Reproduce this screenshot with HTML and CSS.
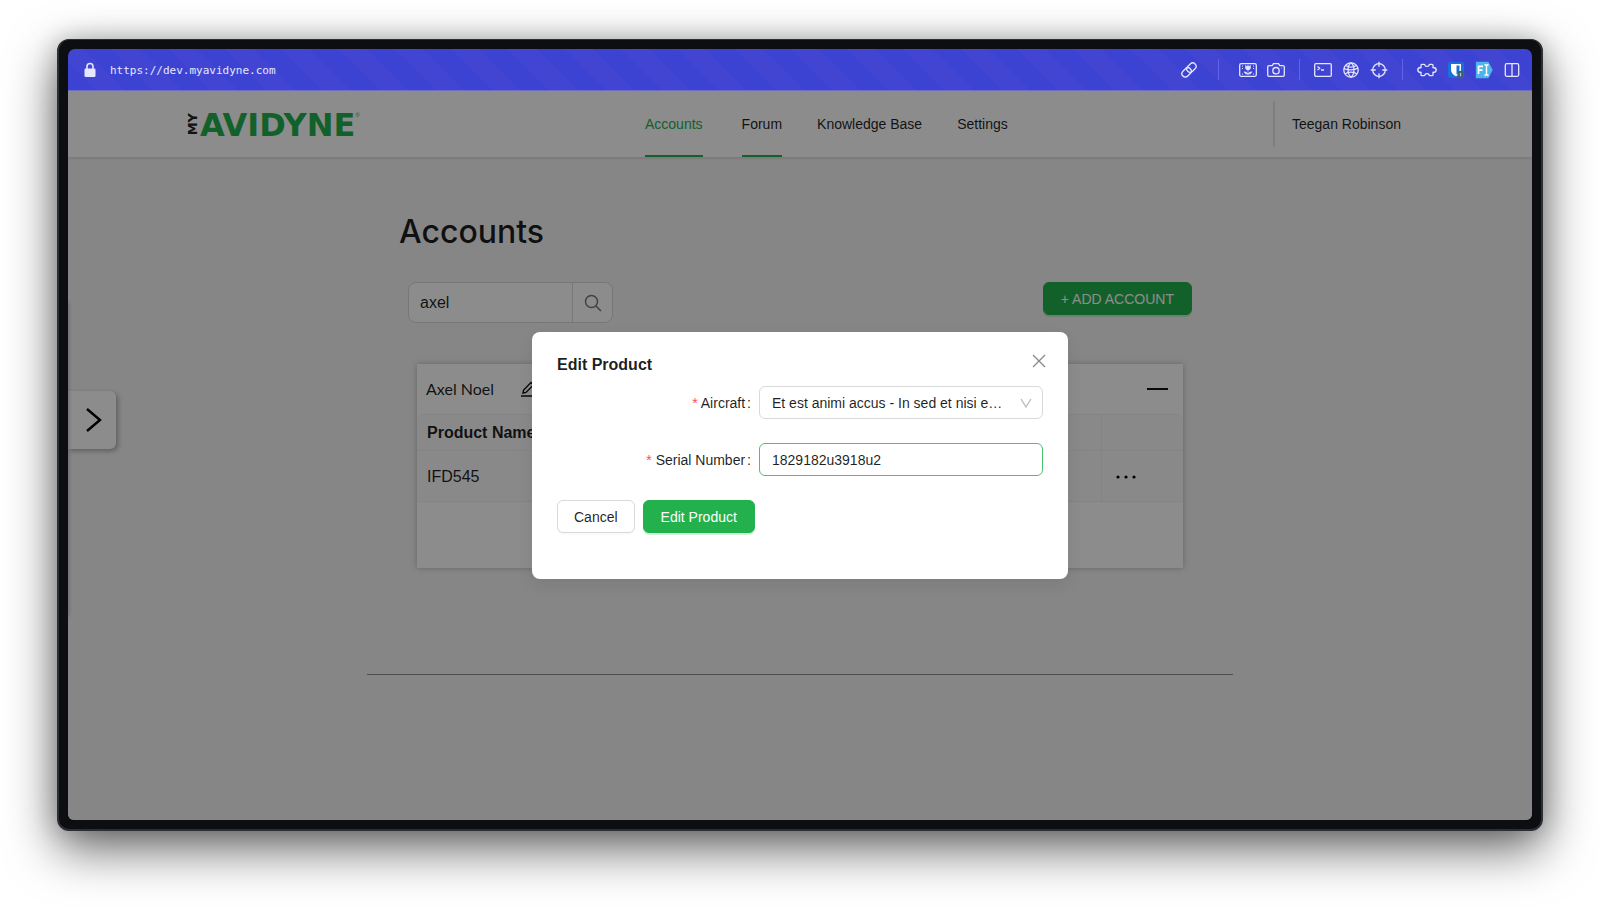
FILE: index.html
```html
<!DOCTYPE html>
<html lang="en">
<head>
<meta charset="utf-8">
<title>MyAvidyne - Accounts</title>
<link rel="stylesheet" href="styles.css">
</head>
<body>
<div class="window">
  <div class="browser-bar">
    <svg class="lock" viewBox="0 0 12 16" width="12" height="16"><path d="M3 7V4.500a3 3 0 0 1 6 0V7" fill="none" stroke="currentColor" stroke-width="1.600"/><rect x="0.500" y="6.500" width="11" height="8.500" rx="1.200" fill="currentColor"/></svg>
    <span class="url">https://dev.myavidyne.com</span>
    <div class="tools">
      <button class="tool" aria-label="Copy link"><svg viewBox="0 0 18 18"><g transform="rotate(-45 9 9)"><rect x="0.400" y="5.600" width="10.400" height="6.800" rx="3.400"/><rect x="7.200" y="5.600" width="10.400" height="6.800" rx="3.400"/></g></svg></button>
    </div>
    <div class="tools group-media">
      <button class="tool" aria-label="Capture image"><svg viewBox="0 0 18 18"><rect x="0.700" y="2.700" width="16.600" height="12.600" rx="1.500"/><path d="M3 5h1M14 5h1M3 7.500h1M14 7.500h1M3 13h1M14 13h1" stroke-width="1"/><path d="M9 9v4M9 13.300c-2 0-3.500-.8-4-2.500 2 0 3.500.8 4 2.500zm0 0c2 0 3.500-.8 4-2.500-2 0-3.500.8-4 2.500zM6.500 4.500L8 5.500 9 4.300l1 1.200 1.500-1V7C11.500 8.500 10 9 9 9S6.500 8.500 6.500 7z" fill="currentColor" stroke-width=".5"/></svg></button>
      <button class="tool" aria-label="Screenshot"><svg viewBox="0 0 18 18"><path d="M2 4.700h3.200L6.500 2.700h5l1.300 2H16a1.300 1.300 0 0 1 1.300 1.300v8a1.300 1.300 0 0 1-1.300 1.300H2A1.300 1.300 0 0 1 .7 14V6A1.300 1.300 0 0 1 2 4.700z"/><circle cx="9" cy="9.700" r="3.200"/><path d="M14.500 7.200h.5"/></svg></button>
    </div>
    <div class="tools group-dev">
      <button class="tool" aria-label="Console"><svg viewBox="0 0 18 18"><rect x="0.700" y="2.700" width="16.600" height="12.600" rx="1.200"/><path d="M3.500 5.500l2.200 1.700-2.200 1.700M7 9h3"/></svg></button>
      <button class="tool" aria-label="Network"><svg viewBox="0 0 18 18"><circle cx="9" cy="9" r="7.200"/><path d="M9 1.800C5 5 5 13 9 16.200M9 1.800c4 3.200 4 11.200 0 14.400M2 7.500c4 2 10 2 14-.5M3 13c3-2.500 9-2.500 12 0M3.500 4.500C7 6.500 11 6.500 14.500 4.500"/></svg></button>
      <button class="tool" aria-label="Inspect"><svg viewBox="0 0 18 18"><circle cx="9" cy="9" r="6.300"/><path d="M9 .7v5M9 12.300v5M.7 9h5M12.300 9h5"/></svg></button>
    </div>
    <div class="tools group-ext">
      <button class="tool wide" aria-label="Extensions"><svg viewBox="0 0 20 18"><path d="M4 6.500V4.300c0-.6.400-1 1-1h2c.8 0 .9.500 1.100 1.100.6 1.400 3.200 1.400 3.800 0 .2-.6.300-1.100 1.100-1.100h2c.6 0 1 .4 1 1v2.200c4.300.1 4.300 4.900 0 5v2.200c0 .6-.4 1-1 1h-2c-.8 0-.9-.5-1.100-1.100-.6-1.400-3.200-1.400-3.800 0-.2.600-.3 1.100-1.100 1.100H5c-.6 0-1-.4-1-1v-2.200c-4.300-.1-4.300-4.900 0-5z"/></svg></button>
      <button class="tool" aria-label="Password manager"><svg viewBox="0 0 18 18"><rect x="1" y="1" width="16" height="16" rx="2.500" fill="#1a6fdc" stroke="none"/><path d="M4 3h10v6c0 3-2.500 5-5 6.300C6.500 14 4 12 4 9z" fill="#fff" stroke="none"/><path d="M9.500 4.500h3V9c0 2-1.500 3.500-3 4.600z" fill="#1a6fdc" stroke="none"/><rect x="10.500" y="10" width="6" height="7" rx="1" fill="#39626f" stroke="none"/><path d="M13.500 11.800v3.500" stroke="#a9c2c8"/></svg></button>
      <button class="tool" aria-label="Fonts"><svg viewBox="0 0 18 18"><path d="M1.500 1.500h11.500L17 9l-4 7.500H1.500z" fill="#4fb4ea" stroke="#4fb4ea"/><path d="M3.500 13V5.300H8M3.500 9.200h4" stroke="#fff" stroke-width="1.700"/><path d="M9.500 3.500l2 1 2-1M11.500 4.500v9M9.500 14.500l2-1 2 1" stroke="#fff" stroke-width="1.400"/></svg></button>
      <button class="tool" aria-label="Split view"><svg viewBox="0 0 18 18"><rect x="2.300" y="2.700" width="13.400" height="12.600" rx="1.500"/><path d="M9 2.700v12.600"/></svg></button>
    </div>
  </div>

  <div class="page">
    <header class="site-header">
      <div class="logo"><span class="logo-my">MY</span><span class="logo-name">AVIDYNE</span><span class="logo-mark">®</span></div>
      <nav class="nav">
        <a href="#" class="nav-link active">Accounts</a>
        <a href="#" class="nav-link open">Forum</a>
        <a href="#" class="nav-link">Knowledge Base</a>
        <a href="#" class="nav-link">Settings</a>
      </nav>
      <div class="user">Teegan Robinson</div>
    </header>

    <button class="drawer-handle" aria-label="Open panel"><svg viewBox="0 0 16 24" width="16" height="24"><path d="M1 1l13 11L1 23" fill="none" stroke="#000" stroke-width="2.400"/></svg></button>
    <div class="drawer-edge"></div>

    <main class="content">
      <h1 class="title">Accounts</h1>
      <div class="toolbar">
        <form class="search">
          <input class="search-input" type="text" value="axel" aria-label="Search accounts">
          <button class="search-button" type="button" aria-label="Search"><svg viewBox="0 0 18 18" width="18" height="18"><circle cx="7.500" cy="7.500" r="6"/><path d="M12 12l5 5"/></svg></button>
        </form>
        <button class="button primary add">+ ADD ACCOUNT</button>
      </div>
      <section class="card">
        <div class="card-head">
          <span class="card-name">Axel Noel</span>
          <button class="icon-button" aria-label="Edit account"><svg viewBox="0 0 16 16" width="16" height="16"><path d="M1 15h14M3 12l.6-3L11 1.600l2.400 2.400L6 11.400z"/></svg></button>
          <button class="icon-button collapse" aria-label="Collapse"><svg viewBox="0 0 21 4" width="21" height="4"><path d="M0 2h21" stroke-width="2"/></svg></button>
        </div>
        <table class="products">
          <thead><tr><th>Product Name</th><th></th><th class="actions"></th></tr></thead>
          <tbody><tr><td>IFD545</td><td></td><td class="actions"><button class="icon-button" aria-label="More"><svg viewBox="0 0 20 8" width="20" height="8"><g fill="#000" stroke="none"><circle cx="2" cy="4" r="1.600"/><circle cx="10" cy="4" r="1.600"/><circle cx="18" cy="4" r="1.600"/></g></svg></button></td></tr></tbody>
        </table>
      </section>
      <hr class="rule">
    </main>

    <div class="mask">
      <div class="modal" role="dialog" aria-labelledby="modal-title">
        <div class="modal-head">
          <h2 class="modal-title" id="modal-title">Edit Product</h2>
          <button class="close" aria-label="Close"><svg viewBox="0 0 14 14" width="14" height="14"><path d="M1 1l12 12M13 1L1 13"/></svg></button>
        </div>
        <form class="form">
          <div class="field">
            <label class="label" for="aircraft">Aircraft</label>
            <div class="select-wrap">
              <select class="control" id="aircraft"><option>Et est animi accus - In sed et nisi excepteur</option></select>
              <svg class="chevron" viewBox="0 0 12 10" width="12" height="10"><path d="M1 1l5 8 5-8"/></svg>
            </div>
          </div>
          <div class="field">
            <label class="label" for="serial">Serial Number</label>
            <input class="control focused" id="serial" type="text" value="1829182u3918u2">
          </div>
          <div class="buttons">
            <button class="button" type="button">Cancel</button>
            <button class="button primary" type="button">Edit Product</button>
          </div>
        </form>
      </div>
    </div>
  </div>
</div>
</body>
</html>
```
FILE: styles.css
```css
* { box-sizing: border-box; }

body {
  margin: 0;
  min-height: 100vh;
  padding: 39px 57px 76px;
  display: flex;
  background: #fff;
  color: rgba(0, 0, 0, 0.88);
  font: 14px/22px "Liberation Sans", Arial, sans-serif;
}

button, input, select { font: inherit; color: inherit; }
button { background: none; border: 0; padding: 0; }
a { color: inherit; text-decoration: none; }
svg { display: block; }

.window {
  flex: 1;
  display: flex;
  flex-direction: column;
  padding: 9px;
  border: 2px solid #2c2f33;
  border-top-width: 1px;
  border-radius: 12px;
  background: #0d0e12;
  box-shadow: 0 18px 50px rgba(0, 0, 0, 0.6), 0 0 24px rgba(0, 0, 0, 0.2);
}

.browser-bar {
  display: flex;
  align-items: center;
  height: 42px;
  padding: 0 11px 0 16px;
  border-bottom: 1px solid #6e6fc4;
  border-radius: 7px 7px 0 0;
  background: repeating-linear-gradient(45deg, #3c43d2 0 20px, #4145d2 20px 40px);
  color: #e6e7ff;
}
.lock { width: 12px; }
.url {
  flex: 1;
  margin-left: 14px;
  padding-top: 2px;
  font: 11px/16px "DejaVu Sans Mono", monospace;
}
.tools { display: flex; align-items: center; gap: 10px; }
.group-media, .group-dev, .group-ext {
  height: 21px;
  margin-left: 14px;
  padding-left: 14px;
  border-left: 1px solid #5d64ea;
}
.group-media { margin-left: 20px; padding-left: 20px; }
.tool { width: 18px; height: 18px; }
.tool.wide { width: 20px; }
.tool svg {
  width: 100%;
  height: 18px;
  fill: none;
  stroke: currentColor;
  stroke-width: 1.3px;
}

.page {
  position: relative;
  flex: 1;
  border-radius: 0 0 6px 6px;
  overflow: hidden;
  background: #f4f4f4;
}

.site-header {
  display: grid;
  grid-template-columns: 577px 1fr 259px;
  align-items: center;
  height: 66px;
  background: #fff;
  box-shadow: 0 1px 3px rgba(0, 0, 0, 0.15);
}
.logo { display: flex; align-items: center; padding-left: 118px; color: #23b14d; }
.logo-my {
  writing-mode: vertical-rl;
  transform: rotate(180deg);
  color: #222;
  font: bold 13px/14px "DejaVu Sans", sans-serif;
}
.logo-name { padding-top: 2px; font: bold 32px/34px "DejaVu Sans", sans-serif; }
.logo-mark { align-self: flex-start; font-size: 6px; line-height: 18px; }
.nav { display: flex; align-self: stretch; }
.nav-link {
  display: flex;
  align-items: center;
  margin-right: 35px;
  padding-top: 2px;
  border-bottom: 2px solid transparent;
}
.nav-link.active { margin-right: 39px; border-color: #23b14d; color: #23b14d; }
.nav-link.open { border-color: #23b14d; }
.user {
  padding: 12px 0 12px 17px;
  border-left: 2px solid #e6e6e6;
}

.drawer-handle {
  position: absolute;
  top: 300px;
  left: 0;
  display: grid;
  place-items: center;
  width: 48px;
  height: 58px;
  padding-left: 4px;
  border-radius: 0 6px 6px 0;
  background: #fff;
  box-shadow: 2px 2px 5px rgba(0, 0, 0, 0.3);
}
.drawer-edge {
  position: absolute;
  top: 211px;
  left: -4px;
  width: 4px;
  height: 314px;
  box-shadow: 0 0 5px rgba(0, 0, 0, 0.3);
}

.content { max-width: 866px; margin: 0 auto; padding: 53px 0 0; }
.title {
  margin: 0;
  padding-left: 32px;
  font: 500 32px/44px Inter, sans-serif;
}
.toolbar {
  display: flex;
  justify-content: space-between;
  align-items: flex-start;
  padding: 28px 41px 0;
}
.search {
  display: flex;
  width: 205px;
  height: 41px;
  border: 1px solid #d9d9d9;
  border-radius: 8px;
  background: #fff;
}
.search-input {
  flex: 1;
  min-width: 0;
  padding: 0 11px;
  border: 0;
  background: none;
  font-size: 16px;
}
.search-button {
  display: grid;
  place-items: center;
  width: 40px;
  border-left: 1px solid #d9d9d9;
}
.search-button svg { fill: none; stroke: #777; stroke-width: 1.5px; }

.button {
  height: 33px;
  padding: 0 16px;
  border: 1px solid #d9d9d9;
  border-radius: 6px;
  background: #fff;
  box-shadow: 0 2px 0 rgba(0, 0, 0, 0.02);
}
.button.primary {
  padding: 0 17px;
  border-color: #23b14d;
  background: #23b14d;
  box-shadow: 0 2px 0 rgba(35, 177, 77, 0.2);
  color: #fff;
}

.card {
  margin: 41px 50px 0;
  padding-bottom: 66px;
  background: #fff;
  box-shadow: 0 0 6px rgba(0, 0, 0, 0.25);
}
.card-head {
  display: flex;
  align-items: center;
  gap: 26px;
  height: 50px;
  padding: 0 15px 0 9px;
}
.card-name { font: 16px/24px Lato, sans-serif; }
.icon-button svg { fill: none; stroke: #111; stroke-width: 1.4px; }
.collapse { margin-left: auto; }
.products {
  width: 100%;
  border-spacing: 0;
  border-radius: 8px 8px 0 0;
  background: #fafafa;
  font-size: 16px;
  text-align: left;
}
.products th, .products td {
  padding: 1px 10px 0;
  border-bottom: 1px solid #f0f0f0;
}
.products th { height: 37px; border-top: 1px solid #f0f0f0; }
.products th:first-child { border-top-left-radius: 8px; }
.products th:last-child { border-top-right-radius: 8px; }
.products td { height: 51px; }
.products .actions { width: 82px; padding-left: 14px; border-left: 1px solid #f0f0f0; }
.products .icon-button { display: block; }
.rule { margin: 106px 0 0; border: 0; border-top: 1px solid #8c8c8c; }

.mask {
  position: absolute;
  inset: 0;
  display: flex;
  align-items: flex-start;
  justify-content: center;
  padding-top: 241px;
  background: rgba(0, 0, 0, 0.45);
}
.modal {
  width: 536px;
  padding: 20px 25px 46px;
  border-radius: 8px;
  background: #fff;
  box-shadow: 0 6px 16px rgba(0, 0, 0, 0.08);
}
.modal-head { display: flex; justify-content: space-between; margin-bottom: 8px; }
.modal-title { margin: 0; font-size: 16px; line-height: 26px; }
.close { width: 14px; height: 18px; margin-right: -3px; }
.close svg, .chevron { fill: none; stroke: #888; stroke-width: 1.3px; }
.form { display: flex; flex-direction: column; gap: 24px; }
.field { display: grid; grid-template-columns: 194px 1fr; align-items: center; gap: 8px; }
.label { text-align: right; }
.label::before { content: "* "; color: #ff4d4f; }
.label::after { content: ":"; margin-left: 2px; }
.select-wrap { position: relative; }
.control {
  width: 100%;
  height: 33px;
  padding: 0 12px;
  border: 1px solid #d9d9d9;
  border-radius: 6px;
  background: #fff;
  outline: 0;
}
select.control { appearance: none; padding-right: 36px; text-overflow: ellipsis; }
.control.focused { border-color: #4cc26d; }
.chevron { position: absolute; top: 12px; right: 11px; }
.select-wrap .chevron { stroke: #bbb; }
.buttons { display: flex; gap: 8px; }
```
